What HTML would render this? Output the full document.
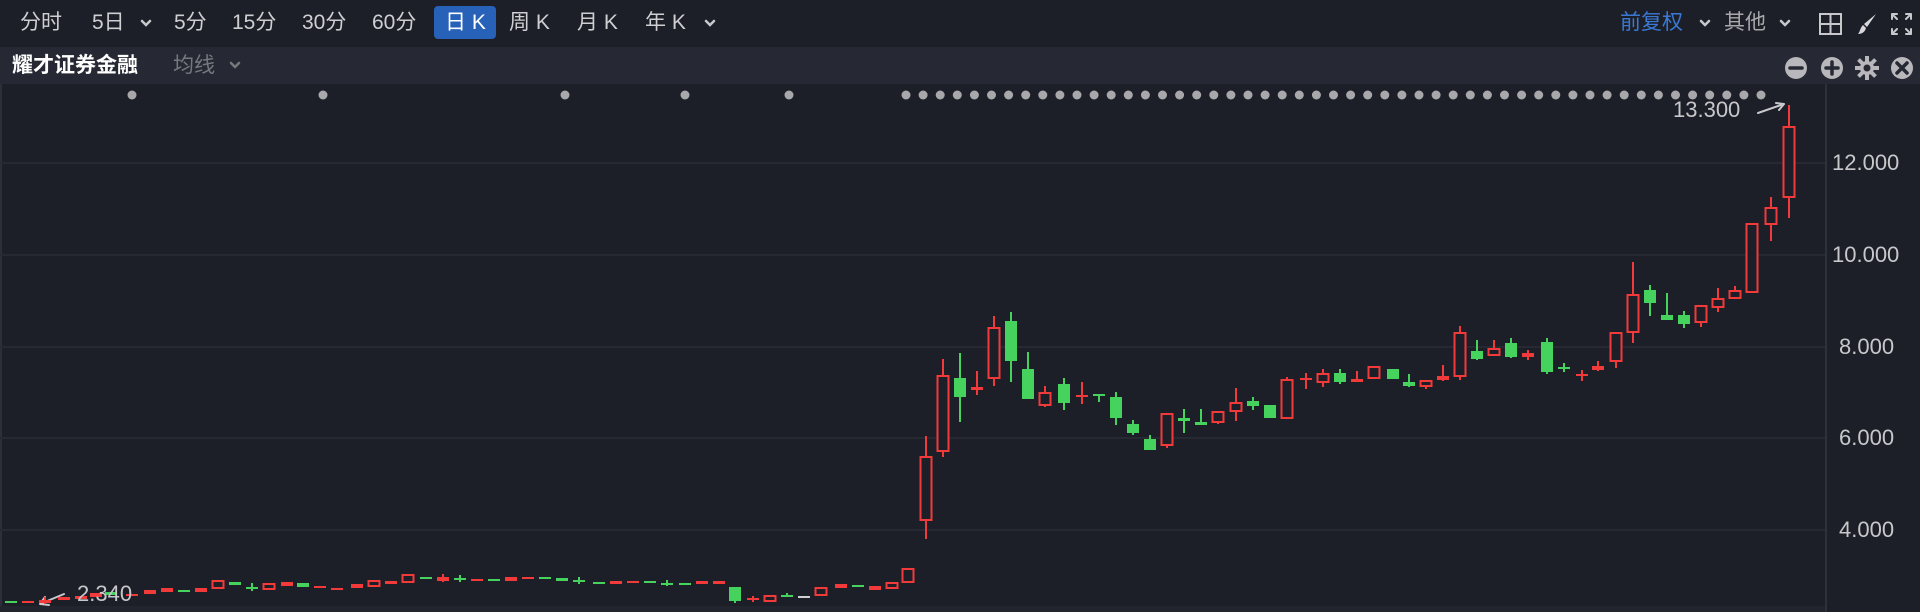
<!DOCTYPE html>
<html><head><meta charset="utf-8"><style>
*{margin:0;padding:0;box-sizing:border-box}
body{width:1920px;height:612px;background:#1c1f27;overflow:hidden;font-family:"Liberation Sans","Noto Sans CJK SC",sans-serif;position:relative}
.top{position:absolute;left:0;top:0;width:1920px;height:47px;background:#1c1f27}
.bar2{position:absolute;left:0;top:47px;width:1920px;height:37px;background:#262833}
.t{position:absolute;color:#cfcfd3;font-size:21px;line-height:24px;white-space:nowrap;z-index:3}
.ax{font-size:22px}
.act{position:absolute;left:434px;top:6px;width:62px;height:33px;background:#2761b8;border-radius:4px;z-index:2}
svg{position:absolute;left:0;top:0;z-index:1}
</style></head><body>
<div class="top"></div>
<div class="bar2"></div>
<div class="act"></div>
<div class="t" style="left:20px;top:11px">分时</div>
<div class="t" style="left:92px;top:11px">5日</div>
<div class="t" style="left:174px;top:11px">5分</div>
<div class="t" style="left:232px;top:11px">15分</div>
<div class="t" style="left:302px;top:11px">30分</div>
<div class="t" style="left:372px;top:11px">60分</div>
<div class="t" style="left:445px;top:11px;color:#fff">日 K</div>
<div class="t" style="left:509px;top:11px">周 K</div>
<div class="t" style="left:577px;top:11px">月 K</div>
<div class="t" style="left:645px;top:11px">年 K</div>
<div class="t" style="left:1620px;top:11px;color:#3a78d4">前复权</div>
<div class="t" style="left:1724px;top:11px;color:#a8a8ac">其他</div>
<div class="t" style="left:12px;top:54px;color:#fff;font-weight:bold">耀才证券金融</div>
<div class="t" style="left:173px;top:54px;color:#77787e">均线</div>
<div class="t ax" style="left:1832px;top:151px;color:#c8c8cc">12.000</div>
<div class="t ax" style="left:1832px;top:243px;color:#c8c8cc">10.000</div>
<div class="t ax" style="left:1839px;top:335px;color:#c8c8cc">8.000</div>
<div class="t ax" style="left:1839px;top:426px;color:#c8c8cc">6.000</div>
<div class="t ax" style="left:1839px;top:518px;color:#c8c8cc">4.000</div>
<div class="t ax" style="left:1673px;top:98px;color:#c8c8cc">13.300</div>
<div class="t ax" style="left:77px;top:582px;color:#c8c8cc">2.340</div>
<svg width="1920" height="612" id="s">
<rect x="0" y="84" width="1920" height="528" fill="#1c1f27"/>
<rect x="0" y="84" width="2" height="528" fill="#2c2f38"/>
<g stroke="#262931" stroke-width="2">
<line x1="0" y1="163" x2="1825" y2="163"/><line x1="0" y1="255" x2="1825" y2="255"/>
<line x1="0" y1="347" x2="1825" y2="347"/><line x1="0" y1="438" x2="1825" y2="438"/>
<line x1="0" y1="530" x2="1825" y2="530"/>
</g>
<line x1="1826" y1="84" x2="1826" y2="612" stroke="#2e3139" stroke-width="2"/>
<rect x="0" y="606" width="1825" height="6" fill="#22252d"/>
<g fill="none" stroke="#c8c8cc" stroke-width="2.5" stroke-linecap="round">
<path d="M142 21l4 4 4-4M706 21l4 4 4-4"/>
<path d="M231 63l4 4 4-4" stroke="#77787e"/>
<path d="M1701 21l4 4 4-4M1781 21l4 4 4-4"/>
</g>
<g fill="none" stroke="#c8c8cc" stroke-width="2" stroke-linecap="round">
<rect x="1820" y="14" width="21" height="20"/><path d="M1830.5 14v20M1820 24h21"/>
<path d="M1892 14h5M1892 14v5M1892 14l5 5M1911 14h-5M1911 14v5M1911 14l-5 5M1892 34h5M1892 34v-5M1892 34l5-5M1911 34h-5M1911 34v-5M1911 34l-5-5"/>
<path d="M1758 113l26-9M1784 104l-8-1M1784 104l-5 6"/>
<path d="M64 594l-24 10M40 604l9 1M40 604l5-7"/>
</g>
<path d="M1876 14l-9 13-3-3zM1863 25l3 3c-1 4-4 6-8 6 2-2 2-6 5-9z" fill="#d8d8dc"/>
<g fill="#b8b8bc">
<circle cx="1796" cy="68" r="11"/><circle cx="1832" cy="68" r="11"/><circle cx="1867" cy="68" r="7"/><circle cx="1902" cy="68" r="11"/>
</g>
<g stroke="#b8b8bc" stroke-width="4">
<path d="M1867 56v24M1855 68h24M1858.5 59.5l17 17M1875.5 59.5l-17 17"/>
</g>
<circle cx="1867" cy="68" r="3.5" fill="#262833"/>
<g stroke="#262833" stroke-width="3.5" stroke-linecap="round">
<path d="M1790 68h12M1826 68h12M1832 62v12M1897 63l10 10M1907 63l-10 10"/>
</g>
<g id="dots" fill="#a8a8ac"></g>
<g id="c"></g>
</svg>
<script>
var d=document.getElementById('dots'),h='';
[132,323,565,685,789].forEach(function(x){h+='<circle cx="'+x+'" cy="95" r="4.5"/>'});
for(var x=906;x<=1770;x+=17.1)h+='<circle cx="'+x.toFixed(1)+'" cy="95" r="4.5"/>';
d.innerHTML=h;
var C=[
[11,'g',601,603],[28,'r',601,603],[45,'R',600,603,597,604],[64,'R',597,600],[81,'R',596,599],[96,'R',593,597],[111,'g',592,595],[132,'R',594,596],[150,'R',590,594],[167,'R',588,592],[184,'g',590,592],[201,'R',588,592],[218,'r',581,588],[235,'g',582,585],[252,'g',587,588,583,591],[269,'r',584,589],[287,'R',582,586],[303,'g',583,587],[320,'R',586,588],[337,'R',588,590],[357,'R',584,588],[374,'r',581,586],[391,'R',581,584],[408,'r',575,582],[426,'g',577,579],[443,'R',577,581,574,582],[460,'g',578,579,575,582],[477,'R',579,580],[494,'g',579,580],[511,'R',577,581],[528,'R',577,579],[545,'g',577,578],[562,'g',578,581],[579,'g',580,581,577,584],[599,'g',582,584],[616,'R',581,584],[633,'R',581,582],[650,'g',581,582],[667,'g',583,584,580,586],[685,'g',583,585],[702,'R',581,584],[719,'R',581,584],[735,'g',587,601,587,603],[753,'R',598,599,596,602],[770,'r',596,601],[787,'g',595,596,593,597],[804,'w',596,597],[821,'r',588,595],[841,'R',584,588],[858,'g',585,587],[875,'R',586,590],[892,'r',583,588],[908,'r',569,582],
[926,'r',457,520,436,539],[943,'r',376,451,359,457],[960,'g',378,397,353,422],[977,'R',387,390,371,395],[994,'r',328,378,316,386],[1011,'g',321,361,312,382],[1028,'g',369,399,352,399],[1045,'r',393,405,386,407],[1064,'g',384,403,378,410],[1082,'R',395,397,382,404],[1099,'g',394,396,394,402],[1116,'g',397,418,392,425],[1133,'g',424,433,420,435],[1150,'g',439,450,435,450],[1167,'r',414,445,414,448],[1184,'g',418,421,409,433],[1201,'g',422,425,409,425],[1218,'r',412,422,411,424],[1236,'r',403,411,388,421],[1253,'g',401,406,397,410],[1270,'g',405,418],[1287,'r',380,418,377,418],[1306,'R',378,380,373,389],[1323,'r',374,382,369,387],[1340,'g',373,382,369,384],[1357,'R',379,382,371,382],[1374,'r',367,378,366,379],[1393,'g',369,379],
[1409,'g',382,386,374,387],[1426,'r',381,386,381,389],[1443,'r',376,380,365,381],[1460,'r',333,376,326,380],[1477,'g',351,359,340,360],[1494,'r',349,355,340,356],[1511,'g',343,357,338,358],[1528,'r',353,357,350,360],[1547,'g',342,372,338,374],[1564,'g',367,369,363,372],[1582,'R',374,376,370,381],[1598,'r',366,370,361,371],[1616,'r',333,361,333,368],[1633,'r',295,332,262,343],[1650,'g',290,303,285,316],[1667,'g',315,320,293,320],[1684,'g',315,324,311,328],[1701,'r',306,322,305,327],[1718,'r',299,307,288,312],[1735,'r',291,298,286,299],[1752,'r',224,292,224,293],[1771,'r',208,224,197,241],[1789,'r',127,197,105,218]];
var s='';
C.forEach(function(a){var x=a[0],t=a[1],b1=a[2],b2=a[3],w1=a.length>4?a[4]:b1,w2=a.length>4?a[5]:b2;
var col=t=='g'?'#46d35d':(t=='w'?'#d0d0d0':'#f23a3a');
s+='<line x1="'+x+'" y1="'+w1+'" x2="'+x+'" y2="'+w2+'" stroke="'+col+'" stroke-width="2"/>';
var hgt=Math.max(b2-b1,2);
if(t=='r'&&hgt>4)s+='<rect x="'+(x-5.5)+'" y="'+b1+'" width="11" height="'+hgt+'" fill="#1c1f27" stroke="'+col+'" stroke-width="2"/>';
else s+='<rect x="'+(x-6)+'" y="'+b1+'" width="12" height="'+hgt+'" fill="'+col+'"/>';});
document.getElementById('c').innerHTML=s;
</script>
</body></html>
